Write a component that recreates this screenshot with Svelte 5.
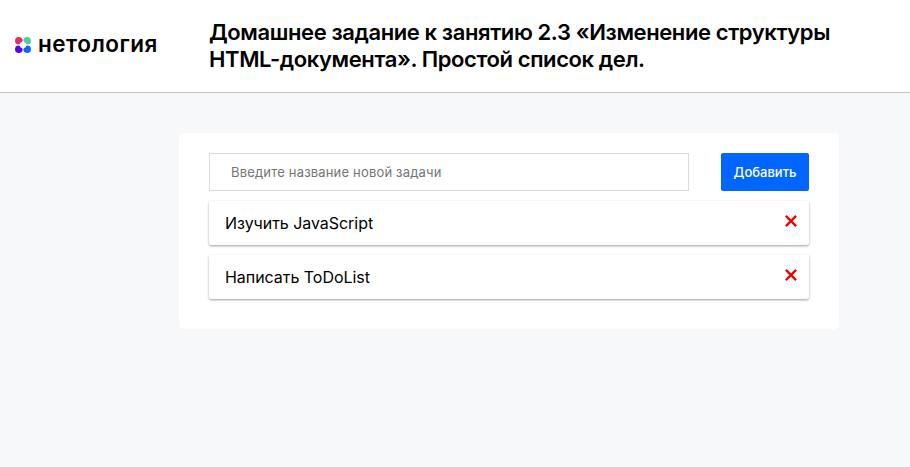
<script>
  let tasks = $state([
    { id: 1, title: 'Изучить JavaScript' },
    { id: 2, title: 'Написать ToDoList' }
  ]);
  let draft = $state('');

  function add(event) {
    event.preventDefault();
    const title = draft.trim();
    if (!title) return;
    tasks.push({ id: Date.now(), title });
    draft = '';
  }

  function remove(id) {
    tasks = tasks.filter((task) => task.id !== id);
  }
</script>

<header>
  <div class="logo">
    <svg width="16" height="16" viewBox="0 0 16 16" aria-hidden="true">
      <circle cx="3.8" cy="3.8" r="3.8" fill="#e42b68" />
      <circle cx="12.2" cy="3.8" r="3.8" fill="#49cf9d" />
      <circle cx="3.8" cy="12.2" r="3.8" fill="#5a00ec" />
      <circle cx="12.2" cy="12.2" r="3.8" fill="#0b68fb" />
      <path d="M8 4 9.4 5.2 10.6 5.4 10.8 6.6 12 8 10.8 9.4 10.6 10.6 9.4 10.8 8 12 6.6 10.8 5.4 10.6 5.2 9.4 4 8 5.2 6.6 5.4 5.4 6.6 5.2Z" fill="#fff" />
    </svg>
    <span>нетология</span>
  </div>
  <h1>Домашнее задание к занятию 2.3 «Изменение структуры<br />HTML-документа». Простой список дел.</h1>
</header>

<main>
  <form onsubmit={add}>
    <input bind:value={draft} placeholder="Введите название новой задачи" />
    <button class="add">Добавить</button>
  </form>
  <div class="list">
    {#each tasks as task (task.id)}
      <div class="task">
        <span class="title">{task.title}</span>
        <button class="remove" aria-label="Удалить" onclick={() => remove(task.id)}>
          <svg width="12" height="12" viewBox="0 0 12 12">
            <path d="M.9.9 11.1 11.1M11.1.9.9 11.1" />
          </svg>
        </button>
      </div>
    {/each}
  </div>
</main>

<style>
  :global(body) {
    margin: 0;
    background: #f6f8fa;
    font-family: Inter, 'Liberation Sans', sans-serif;
    color: #000;
  }
  * {
    box-sizing: border-box;
  }
  header {
    display: flex;
    height: 93px;
    background: #fff;
    border-bottom: 1px solid #c4c8cc;
  }
  .logo {
    display: flex;
    align-items: center;
    width: 209px;
    height: 89px;
    padding-left: 15px;
    gap: 7px;
  }
  .logo span {
    font-size: 22.5px;
    font-weight: 600;
    line-height: 24px;
    letter-spacing: 0.5px;
    margin-top: -2px;
  }
  h1 {
    margin: 0;
    padding-top: 19px;
    font-size: 22px;
    font-weight: 600;
    line-height: 27px;
    letter-spacing: -0.4px;
    white-space: nowrap;
  }
  main {
    width: 660px;
    height: 196px;
    margin: 40px 0 0 179px;
    padding: 20px 30px;
    border-radius: 5px;
    background: #fff;
  }
  form {
    display: flex;
    justify-content: space-between;
  }
  input {
    width: 480px;
    height: 38px;
    padding: 0 21px;
    border: 1px solid #d9dadc;
    border-radius: 0;
    outline: 0;
    background: #fff;
    font: 400 13px/18px Inter, sans-serif;
    letter-spacing: 0.18px;
  }
  input::placeholder {
    color: #757575;
    opacity: 1;
  }
  .add {
    width: 88px;
    height: 38px;
    padding: 0;
    border: 0;
    border-radius: 2px;
    background: #06f;
    color: #fff;
    font: 500 13px/18px Inter, sans-serif;
  }
  .list {
    display: flex;
    flex-direction: column;
    gap: 10px;
    margin-top: 10px;
  }
  .task {
    display: flex;
    justify-content: space-between;
    height: 44px;
    padding: 0 12px 0 16px;
    border-radius: 2px;
    box-shadow: 0 1px 3px rgba(0, 0, 0, 0.2), 0 1px 2px rgba(0, 0, 0, 0.2);
  }
  .title {
    font-size: 16px;
    line-height: 45px;
    letter-spacing: -0.04px;
  }
  .remove {
    display: flex;
    width: 12px;
    height: 12px;
    margin-top: 14px;
    padding: 0;
    border: 0;
    background: none;
  }
  .remove path {
    fill: none;
    stroke: #e60808;
    stroke-width: 2.4;
  }
</style>
